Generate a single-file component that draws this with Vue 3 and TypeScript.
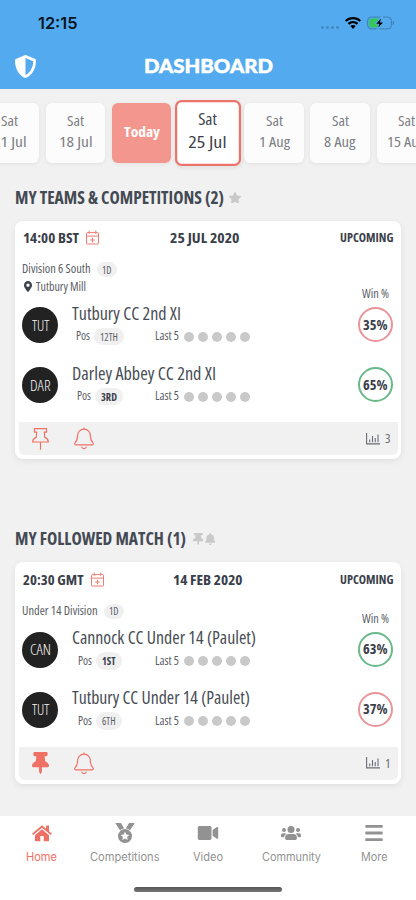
<script setup lang="ts">
import type { Directive } from 'vue'

interface Day { top: string; bottom?: string; w: number[]; kind?: 'today' | 'selected' }
interface Team { code: string; codeW: number; name: string; nameW: number; pos: string; posW: number; top?: boolean; win: string; leads: boolean }
interface Match {
  title: string; titleW: number; followed: boolean
  time: string; timeW: number; date: string; dateW: number; shift: number
  division: string; divisionW: number; venue?: string; pinned: boolean; stats: number; teams: Team[]
}

// Condenses a label horizontally to the given width in pixels.
const vFit: Directive<HTMLElement, number> = {
  mounted(el, { value }) {
    const natural = el.getBoundingClientRect().width / (el.closest('.selected') ? 1.1 : 1)
    el.style.transform = `scaleX(${value / natural})`
    el.style.marginRight = `${value - natural}px`
  },
}

const days: Day[] = [
  { top: 'Sat', bottom: '11 Jul', w: [17, 33.5] },
  { top: 'Sat', bottom: '18 Jul', w: [17, 33.5] },
  { top: 'Today', w: [36], kind: 'today' },
  { top: 'Sat', bottom: '25 Jul', w: [17, 34.8], kind: 'selected' },
  { top: 'Sat', bottom: '1 Aug', w: [17, 31] },
  { top: 'Sat', bottom: '8 Aug', w: [17, 31.5] },
  { top: 'Sat', bottom: '15 Aug', w: [17, 38] },
]

const matches: Match[] = [
  {
    title: 'MY TEAMS & COMPETITIONS (2)', titleW: 209, followed: false,
    time: '14:00 BST', timeW: 56, date: '25 JUL 2020', dateW: 69.5, shift: -2.5,
    division: 'Division 6 South', divisionW: 68.5, venue: 'Tutbury Mill', pinned: false, stats: 3,
    teams: [
      { code: 'TUT', codeW: 17.5, name: 'Tutbury CC 2nd XI', nameW: 109, pos: '12TH', posW: 18, win: '35%', leads: false },
      { code: 'DAR', codeW: 20.5, name: 'Darley Abbey CC 2nd XI', nameW: 144, pos: '3RD', posW: 16, top: true, win: '65%', leads: true },
    ],
  },
  {
    title: 'MY FOLLOWED MATCH (1)', titleW: 171, followed: true,
    time: '20:30 GMT', timeW: 60.5, date: '14 FEB 2020', dateW: 69.5, shift: 0.5,
    division: 'Under 14 Division', divisionW: 75.5, pinned: true, stats: 1,
    teams: [
      { code: 'CAN', codeW: 21, name: 'Cannock CC Under 14 (Paulet)', nameW: 184, pos: '1ST', posW: 13.5, top: true, win: '63%', leads: true },
      { code: 'TUT', codeW: 17.5, name: 'Tutbury CC Under 14 (Paulet)', nameW: 178, pos: '6TH', posW: 13.5, win: '37%', leads: false },
    ],
  },
]

const tabs = [
  { id: 'home', label: 'Home', w: 31 },
  { id: 'medal', label: 'Competitions', w: 69.5 },
  { id: 'video', label: 'Video', w: 30 },
  { id: 'users', label: 'Community', w: 59 },
  { id: 'more', label: 'More', w: 26.5 },
]

const thumbtack = 'M298.028 214.267L285.793 96H328c13.255 0 24-10.745 24-24V24c0-13.255-10.745-24-24-24H56C42.745 0 32 10.745 32 24v48c0 13.255 10.745 24 24 24h42.207L85.972 214.267C37.465 236.820 0 277.261 0 328c0 13.255 10.745 24 24 24h136v104.007c0 1.242.289 2.467.845 3.578l24 48c2.941 5.882 11.364 5.893 14.311 0l24-48a8.008 8.008 0 0 0 .845-3.578V352h136c13.255 0 24-10.745 24-24-.001-51.183-37.983-91.420-85.973-113.733z'
</script>

<template>
  <div class="screen">
    <header class="header">
      <div class="status">
        <span v-fit="39.500" class="fit clock">12:15</span>
        <div class="indicators">
          <div class="cell"><i v-for="n in 4" :key="n" /></div>
          <svg class="wifi" viewBox="0 0 16 12">
            <path d="M8 0C4.900 0 2.100 1.200 0 3.200l1.500 1.600C3.200 3.200 5.500 2.200 8 2.200s4.800 1 6.500 2.600L16 3.200C13.900 1.200 11.100 0 8 0zM8 4C5.900 4 4.100 4.800 2.700 6.100l1.500 1.600C5.200 6.800 6.500 6.200 8 6.200s2.800.6 3.800 1.500l1.500-1.600C11.900 4.800 10.100 4 8 4zM8 7.900c-1.100 0-2 .4-2.700 1.100L8 11.900 10.700 9C10 8.300 9.100 7.900 8 7.900z" />
          </svg>
          <svg class="battery" viewBox="0 0 28 14">
            <rect x=".6" y="1.100" width="23.800" height="11.800" rx="3.600" fill="none" stroke="#3d7eb2" />
            <path d="M25.700 5v4c.9-.3 1.300-1 1.300-2s-.4-1.700-1.300-2z" fill="#3d7eb2" />
            <rect x="2.200" y="2.600" width="13" height="8.800" rx="1.800" fill="#35c759" />
            <path d="M14.200 0L7.400 8h3.400l-1.400 6h2l6.700-8h-3.400L16.200 0z" fill="#54aaee" />
            <path d="M14 2.600L9.300 7.700h3l-1 3.800 4.700-5.100h-3z" fill="#000" />
          </svg>
        </div>
      </div>
      <div class="titlebar">
        <svg class="shield" viewBox="16 0 480 512" preserveAspectRatio="none">
          <path d="M466.500 83.700l-192-80a48.150 48.150 0 0 0-36.900 0l-192 80C27.700 91.100 16 108.600 16 128c0 198.500 114.500 335.700 221.500 380.300 11.800 4.900 25.100 4.900 36.900 0C360.100 472.600 496 349.300 496 128c0-19.400-11.700-36.900-29.500-44.300zM256.100 446.300l-.1-381 175.900 73.300c-3.300 151.400-82.100 261.100-175.800 307.700z" />
        </svg>
        <h1 v-fit="129" class="fit">DASHBOARD</h1>
      </div>
    </header>

    <nav class="days">
      <div v-for="(d, i) in days" :key="i" class="day" :class="d.kind">
        <div class="line"><span v-fit="d.w[0]" class="fit">{{ d.top }}</span></div>
        <div v-if="d.bottom" class="line"><span v-fit="d.w[1]" class="fit">{{ d.bottom }}</span></div>
      </div>
    </nav>

    <main>
      <section v-for="m in matches" :key="m.title" class="section">
        <h2 class="heading">
          <span v-fit="m.titleW" class="fit">{{ m.title }}</span>
          <svg v-if="!m.followed" class="star" viewBox="20 0 536 512"><path d="M259.300 17.800L194 150.200 47.900 171.500c-26.200 3.800-36.700 36.100-17.700 54.600l105.700 103-25 145.500c-4.500 26.300 23.200 46 46.400 33.700L288 439.600l130.700 68.700c23.200 12.200 50.900-7.400 46.400-33.700l-25-145.500 105.700-103c19-18.500 8.500-50.800-17.700-54.600L382 150.200 316.700 17.800c-11.700-23.600-45.600-23.900-57.400 0z" /></svg>
          <span v-else class="marks">
            <svg viewBox="0 0 384 512" preserveAspectRatio="none"><path :d="thumbtack" /></svg>
            <svg viewBox="0 0 448 512" preserveAspectRatio="none"><path d="M224 512c35.320 0 63.970-28.650 63.970-64H160.030c0 35.350 28.650 64 63.970 64zm215.390-149.710c-19.320-20.760-55.470-51.990-55.470-154.290 0-77.700-54.480-139.900-127.940-155.160V32c0-17.670-14.320-32-31.980-32s-31.980 14.330-31.980 32v20.840C118.560 68.100 64.080 130.300 64.080 208c0 102.300-36.150 133.530-55.470 154.290-6 6.450-8.660 14.160-8.610 21.710.11 16.400 12.980 32 32.100 32h383.800c19.120 0 32-15.600 32.100-32 .05-7.550-2.610-15.270-8.610-21.710z" /></svg>
          </span>
        </h2>

        <article class="card">
          <div class="card-head">
            <div class="when">
              <span v-fit="m.timeW" class="fit">{{ m.time }}</span>
              <svg class="calendar" viewBox="0 0 13 15">
                <path d="M1.300 2.600h10.400q.8 0 .8.800v9.800q0 .8-.8.800H1.300q-.8 0-.8-.8V3.400q0-.8.8-.8zM.5 6.100h12M3.200.5v3.300M9.800.5v3.300M6.500 7.700v4.600M4.200 10h4.600" />
              </svg>
            </div>
            <div class="date" :style="{ paddingLeft: m.shift + 2.5 + 'px' }"><span v-fit="m.dateW" class="fit">{{ m.date }}</span></div>
            <div class="state"><span v-fit="53.500" class="fit">UPCOMING</span></div>
          </div>

          <div class="body">
            <div class="fixture">
              <div class="division">
                <span v-fit="m.divisionW" class="fit">{{ m.division }}</span>
                <span class="format"><span v-fit="9.500" class="fit">1D</span></span>
              </div>
              <div v-if="m.venue" class="venue">
                <svg viewBox="0 0 384 512" preserveAspectRatio="none"><path d="M172.268 501.670C26.970 291.031 0 269.413 0 192 0 85.961 85.961 0 192 0s192 85.961 192 192c0 77.413-26.970 99.031-172.268 309.670-9.535 13.774-29.930 13.773-39.464 0zM192 272c44.183 0 80-35.817 80-80s-35.817-80-80-80-80 35.817-80 80 35.817 80 80 80z" /></svg>
                <span v-fit="50" class="fit">{{ m.venue }}</span>
              </div>
              <div v-for="t in m.teams" :key="t.name" class="team">
                <div class="avatar"><span v-fit="t.codeW" class="fit">{{ t.code }}</span></div>
                <div class="info">
                  <div class="name"><span v-fit="t.nameW" class="fit">{{ t.name }}</span></div>
                  <div class="form">
                    <div class="position">
                      <span v-fit="14" class="fit">Pos</span>
                      <span class="rank" :class="{ top: t.top }"><span v-fit="t.posW" class="fit">{{ t.pos }}</span></span>
                    </div>
                    <span v-fit="24" class="fit">Last 5</span>
                    <div class="dots"><i v-for="n in 5" :key="n" /></div>
                  </div>
                </div>
              </div>
            </div>
            <div class="odds">
              <div class="odds-label"><span v-fit="27" class="fit">Win %</span></div>
              <div v-for="t in m.teams" :key="t.name" class="ring" :class="{ leads: t.leads }">
                <span v-fit="24.500" class="fit">{{ t.win }}</span>
              </div>
            </div>
          </div>

          <div class="card-foot">
            <svg v-if="m.pinned" class="pin solid" viewBox="0 0 384 512" preserveAspectRatio="none"><path :d="thumbtack" /></svg>
            <svg v-else class="pin" viewBox="0 0 17 22">
              <path d="M2.500.6h12v3.500h-2.200l.4 5q3.300 1.400 3.700 4.900H.6q.4-3.500 3.700-4.900l.4-5H2.500zM8.500 14v7.700" />
            </svg>
            <svg class="bell" viewBox="0 0 20 23">
              <path d="M10 .5v1.600M10 2.100c-3.800 0-6.400 3-6.400 6.500 0 4-.9 5.600-2.500 7.200-.9.900-.4 2 .7 2h16.400c1.100 0 1.600-1.100.7-2-1.600-1.600-2.500-3.200-2.500-7.200 0-3.500-2.600-6.500-6.400-6.500zM7.600 19.700c.3 1.300 1.200 2 2.400 2s2.100-.7 2.400-2" />
            </svg>
            <div class="stats">
              <svg viewBox="0 0 14 12"><path d="M.6 0v10.900H14M3.700 6.500v2.700M6.500 3v6.200M9.200 5v4.200M12 1.500v7.700" /></svg>
              <span v-fit="5.500" class="fit">{{ m.stats }}</span>
            </div>
          </div>
        </article>
      </section>
    </main>

    <footer class="tabbar">
      <div class="tabs">
        <div v-for="(t, i) in tabs" :key="t.id" class="tab" :class="{ active: i === 0 }">
          <svg v-if="t.id === 'home'" viewBox="0 0 24 24">
            <path d="M12 4.300L2 12.700l1.200 1.400L12 6.800l8.800 7.300 1.200-1.400-3-2.500V4.400h-2.900v3.300z" />
            <path d="M12 8.300l-7 5.900v5.200q0 .8.800.8h4.500v-5.100h3.400v5.100h4.500q.8 0 .8-.8v-5.200z" />
          </svg>
          <svg v-else-if="t.id === 'medal'" viewBox="0 0 24 24">
            <path d="M2.300 2h5.200q.5 0 .8.500l2.800 5q-2.400.3-4 1.900zM21.700 2h-5.200q-.5 0-.8.500l-2.800 5q2.400.3 4 1.900z" />
            <path fill-rule="evenodd" d="M12 8.100a7 7 0 1 0 0 14 7 7 0 0 0 0-14zm0 2.700l1.300 2.700 3 .4-2.200 2.100.5 3-2.600-1.400L9.400 19l.5-3-2.200-2.100 3-.4z" />
          </svg>
          <svg v-else-if="t.id === 'video'" viewBox="0 0 24 24">
            <rect x="1.800" y="4.900" width="13.700" height="14" rx="1.700" />
            <path d="M16.600 9l3.900-2.800c.8-.5 1.700 0 1.700.9v9.600c0 .9-.9 1.400-1.700.9l-3.900-2.800z" />
          </svg>
          <svg v-else-if="t.id === 'users'" viewBox="0 0 24 24">
            <circle cx="12" cy="8.600" r="3.500" /><circle cx="5" cy="9.100" r="2" /><circle cx="19" cy="9.100" r="2" />
            <path d="M9.800 13h4.400q3.700 0 3.700 3.700v.9q0 1.400-1.400 1.400h-9q-1.400 0-1.400-1.400v-.9q0-3.700 3.700-3.700zM4 12.200h2q.8 0 1.400.5-2.200 1.200-2.500 3.500H3q-1 0-1-1v-1q0-2 2-2zM20 12.200h-2q-.8 0-1.400.5 2.200 1.200 2.500 3.500H21q1 0 1-1v-1q0-2-2-2z" />
          </svg>
          <svg v-else viewBox="0 0 24 24">
            <path d="M3.900 4h16.200q.6 0 .6.600v1.600q0 .6-.6.600H3.900q-.6 0-.6-.6V4.600q0-.6.600-.6zM3.900 10.600h16.200q.6 0 .6.600v1.600q0 .6-.6.600H3.900q-.6 0-.6-.6v-1.600q0-.6.600-.6zM3.900 17.200h16.200q.6 0 .6.600v1.600q0 .6-.6.600H3.900q-.6 0-.6-.6v-1.600q0-.6.600-.6z" />
          </svg>
          <div><span v-fit="t.w" class="fit">{{ t.label }}</span></div>
        </div>
      </div>
      <div class="home-bar" />
    </footer>
  </div>
</template>

<style>
body { margin: 0; background: #f1f1f1; }
</style>

<style scoped>
.screen {
  width: 416px; height: 900px; overflow: hidden; display: flex; flex-direction: column;
  background: #f1f1f1; color: #5a5e66; box-sizing: border-box;
  font-family: "Open Sans", sans-serif; font-stretch: 75%;
}
svg { display: block; flex: none; fill: currentColor; }
.fit { display: inline-block; white-space: nowrap; transform-origin: 0 50%; flex: none; }

.header { height: 88.500px; background: #54aaee; flex: none; font-stretch: 100%; }
.status { height: 46px; display: flex; justify-content: space-between; padding: 0 21px 0 38px; align-items: center; }
.clock { font: 600 16px/46px Inter, sans-serif; color: #071522; }
.indicators { display: flex; align-items: center; height: 46px; }
.cell { display: flex; gap: 2px; margin: 8px 6.500px 0 0; }
.cell i { width: 3px; height: 3px; border-radius: 50%; background: #4589bf; }
.wifi { width: 16px; height: 12px; margin-right: 6px; fill: #000; }
.battery { width: 28px; height: 14px; }
.titlebar { display: grid; grid-template-columns: 129px 1fr; height: 41px; align-items: center; padding-left: 15px; }
.shield { width: 21px; height: 23px; fill: #fff; }
h1 { margin: 0 0 1px; font: 900 19.500px/40px Lato, sans-serif; color: #fff; justify-self: start; -webkit-text-stroke: .5px #fff; }

.days { display: flex; gap: 6.700px; margin: 14.500px 0 0 -20.500px; height: 59.500px; flex: none; }
.day {
  width: 59.500px; box-sizing: border-box; flex: none; border-radius: 6px; background: #fcfcfc; color: #7c7f84;
  display: flex; flex-direction: column; align-items: center; justify-content: center; padding-bottom: 3px;
  box-shadow: 0 1px 4px rgba(0, 0, 0, .07); font-size: 15px;
}
.line { height: 21px; line-height: 21px; display: flex; justify-content: center; }
.today { background: #f3968e; color: #fff; font-weight: 700; font-size: 15px; }
.selected { background: #fff; color: #3d424b; border: 2px solid #ec7369; transform: scale(1.100); z-index: 1; }

main { padding: 23.500px 15px 0; flex: 1; min-height: 0; }
.section { margin-bottom: 68.700px; }
.section:last-child { margin-bottom: 0; }
.heading {
  height: 22px; margin: 0 0 12.500px; padding-top: 1px; box-sizing: border-box; display: flex; align-items: center; color: #444a54;
  font-size: 17px; line-height: 22px; font-weight: 700;
}
.star { width: 12px; height: 11.500px; margin-left: 5px; fill: #c9c9c9; }
.marks { display: flex; gap: 1.500px; margin-left: 6.500px; color: #c9c9c9; }
.marks svg { width: 10.500px; height: 12px; }

.card {
  width: 386px; border-radius: 8px; background: #fff; box-sizing: border-box;
  padding: 6.500px 3.500px 4px; box-shadow: 0 2px 6px rgba(0, 0, 0, .08);
}
.card-head {
  display: grid; grid-template-columns: 147.800px 1fr auto; height: 20px; line-height: 21px; padding: 0 4px;
  color: #3a404a; font-size: 14px; font-weight: 700;
}
.when { display: flex; align-items: center; gap: 8px; }
.calendar { width: 13px; height: 15px; margin-left: -.5px; fill: none; stroke: #ee7c72; stroke-width: 1; }
.state { font-size: 12.500px; }
.body { display: flex; justify-content: space-between; padding: 14px 4.500px 0 3.800px; }
.division, .venue { height: 17px; display: flex; align-items: center; font-size: 12.300px; line-height: 16px; }
.division > .fit { margin-top: -1px; }
.format, .rank { background: #f0f0f1; display: flex; align-items: center; }
.format { height: 15px; border-radius: 8px; padding: 0 5.200px; margin-left: 6px; font-size: 10.500px; }
.venue svg { width: 8px; height: 11px; margin: 0 4.500px 0 1.300px; fill: #3d434d; }
.team { height: 60px; display: flex; align-items: center; }
.avatar {
  width: 36px; height: 36px; border-radius: 50%; background: #222; color: #f4f4f4; flex: none;
  display: flex; align-items: center; justify-content: center; font-size: 14.500px; font-weight: 300;
}
.info { margin: -4px 0 0 13.500px; }
.name { height: 24px; line-height: 25px; font-size: 17.300px; color: #484d55; }
.form { display: flex; align-items: center; height: 18px; margin-top: 3px; font-size: 12.300px; line-height: 16px; }
.form > .fit, .position > .fit { margin-top: -1px; }
.position { width: 56px; display: flex; align-items: center; justify-content: center; margin-right: 27px; }
.rank { height: 17.500px; border-radius: 9px; margin-left: 4px; padding: 0 6.300px; font-size: 11px; }
.rank.top { font-weight: 700; color: #3a404a; }
.dots { display: flex; gap: 4px; margin-left: 5.500px; }
.dots i { width: 10px; height: 10px; border-radius: 50%; background: #c9c9c9; }
.odds { width: 35px; display: flex; flex-direction: column; justify-content: flex-end; align-items: center; padding-bottom: 13px; }
.odds-label { height: 16px; line-height: 17px; font-size: 12.300px; margin-bottom: 6px; display: flex; }
.ring {
  width: 35px; height: 35px; box-sizing: border-box; border: 2px solid #ea949b; border-radius: 50%;
  display: flex; align-items: center; justify-content: center; color: #3a404a; font-size: 14px; font-weight: 700;
}
.ring .fit { margin-top: -1px; }
.ring + .ring { margin-top: 25px; }
.ring.leads { border-color: #6bb98b; }
.card-foot {
  margin-top: 7px; height: 33px; background: #f1f1f1; border-radius: 0 0 6px 6px; display: flex; align-items: center;
  padding: 0 7.500px 0 13px; color: #ef7065;
}
.pin { width: 17px; height: 22px; }
.bell { width: 20px; height: 23px; margin-left: 25.500px; }
.pin:not(.solid), .bell { fill: none; stroke: currentColor; stroke-width: 1.150; }
.stats { margin-left: auto; display: flex; align-items: center; color: #696d74; font-size: 13px; }
.stats svg { width: 14px; height: 12px; margin-right: 5px; fill: none; stroke: currentColor; stroke-width: 1.100; }
.stats .fit { margin-top: -1px; }

.tabbar { height: 84px; background: #fff; flex: none; font-family: Inter, sans-serif; font-stretch: 100%; }
.tabs { display: grid; grid-template-columns: repeat(5, 1fr); }
.tab { display: flex; flex-direction: column; align-items: center; color: #929292; font-size: 11.500px; line-height: 16px; padding-top: 5px; }
.tab svg { width: 24px; height: 24px; }
.tab div { margin-top: 4px; height: 16px; display: flex; }
.tab.active { color: #ee7065; }
.home-bar { width: 148px; height: 5px; margin: 21.500px auto 0; border-radius: 3px; background: linear-gradient(#555, #777); }
</style>
